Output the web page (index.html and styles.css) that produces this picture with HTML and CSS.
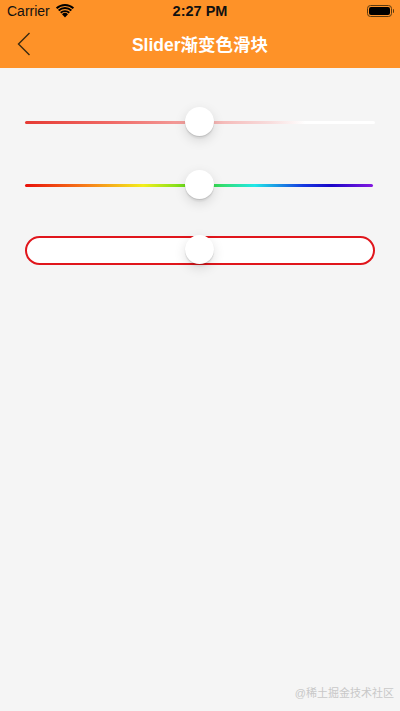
FILE: index.html
```html
<!DOCTYPE html>
<html lang="zh-CN">
<head>
    <meta charset="UTF-8">
    <meta name="viewport" content="width=device-width, initial-scale=1.0">
    <title>Slider渐变色滑块</title>
    <link rel="stylesheet" href="styles.css">
</head>
<body>

<div class="header">
    <div class="status-bar">
        <div class="carrier">
            Carrier
            <svg class="wifi" width="20" height="14" viewBox="0 0 18 13">
                <path d="M9 12.6 L6.2 9.5 A4 4 0 0 1 11.8 9.5 Z" fill="#000"/>
                <path d="M4.4 7.5 A6.8 6.8 0 0 1 13.6 7.5 L12.4 8.8 A5 5 0 0 0 5.6 8.8 Z" fill="#000"/>
                <path d="M2.5 5.4 A9.6 9.6 0 0 1 15.5 5.4 L14.3 6.7 A7.8 7.8 0 0 0 3.7 6.7 Z" fill="#000"/>
                <path d="M0.6 3.3 A12.4 12.4 0 0 1 17.4 3.3 L16.2 4.6 A10.6 10.6 0 0 0 1.8 4.6 Z" fill="#000"/>
            </svg>
        </div>
        <div class="time">2:27 PM</div>
        <div class="battery">
            <div class="battery-body"><div class="battery-level"></div></div>
            <div class="battery-nub"></div>
        </div>
    </div>
    <div class="nav-bar">
        <svg class="back" width="14" height="24" viewBox="0 0 14 24">
            <polyline points="12.5,1 1.5,12 12.5,23" fill="none" stroke="#3a2a10" stroke-width="1.4"/>
        </svg>
        <h1>Slider渐变色滑块</h1>
    </div>
</div>

<div class="content">
    <div class="slider">
        <div class="track track-fade"></div>
        <div class="thumb"></div>
    </div>
    <div class="slider">
        <div class="track track-rainbow"></div>
        <div class="thumb"></div>
    </div>
    <div class="slider slider-box">
        <div class="track-box"></div>
        <div class="thumb"></div>
    </div>
</div>

<div class="watermark">@稀土掘金技术社区</div>

</body>
</html>
```

FILE: styles.css
```css
/* General */
* {
    margin: 0;
    padding: 0;
    box-sizing: border-box;
}

body {
    font-family: "Liberation Sans", "Noto Sans CJK SC", sans-serif;
    background: #f5f5f5;
    width: 400px;
    height: 711px;
    position: relative;
    overflow: hidden;
}

/* Header */
.header {
    background: #fe9228;
    height: 68px;
}

.status-bar {
    height: 21px;
    display: flex;
    align-items: center;
    justify-content: space-between;
    padding: 0 6px 0 7px;
    position: relative;
}

.carrier {
    font-size: 14px;
    color: #111;
    display: flex;
    align-items: center;
    gap: 5px;
}

.time {
    position: absolute;
    left: 0;
    right: 0;
    text-align: center;
    font-size: 14.5px;
    font-weight: bold;
    color: #111;
    pointer-events: none;
}

.battery {
    display: flex;
    align-items: center;
    gap: 1px;
}

.battery-body {
    width: 25px;
    height: 12px;
    border: 1px solid #5a3a10;
    border-radius: 3.5px;
    padding: 1px;
}

.battery-level {
    width: 100%;
    height: 100%;
    background: #000;
    border-radius: 2px;
}

.battery-nub {
    width: 1.5px;
    height: 4px;
    background: #5a3a10;
    border-radius: 0 1px 1px 0;
}

.nav-bar {
    height: 47px;
    display: flex;
    align-items: center;
    justify-content: center;
    position: relative;
}

.back {
    position: absolute;
    left: 17px;
    top: 11px;
}

.nav-bar h1 {
    font-size: 17.5px;
    font-weight: bold;
    color: #fff;
    margin-top: -2px;
}

/* Sliders */
.content {
    padding: 39px 25px 0;
    display: flex;
    flex-direction: column;
    gap: 33px;
}

.slider {
    height: 30px;
    position: relative;
    display: flex;
    align-items: center;
}

.track {
    width: 100%;
    height: 3px;
    border-radius: 2px;
}

.track-fade {
    background: linear-gradient(90deg, #e53a33 0%, #f06a66 25%, #f3aaa8 50%, #f8dcdc 70%, #ffffff 80%, #ffffff 100%);
}

.track-rainbow {
    width: 99.5%;
    background: linear-gradient(90deg, #e8100a 0%, #f7801a 18%, #f3ef1c 34%, #40d61a 50%, #20e8e8 66%, #1538e0 80%, #1a06c8 88%, #8418e0 100%);
}

.slider-box {
    margin-top: 2px;
}

.track-box {
    width: 100%;
    height: 29px;
    border: 2px solid #e0161c;
    border-radius: 15px;
    background: #fff;
}

.thumb {
    position: absolute;
    left: 160px;
    top: 0;
    width: 29px;
    height: 29px;
    border-radius: 50%;
    background: #fff;
    box-shadow: 0 4px 12px rgba(0, 0, 0, 0.13), 0 1px 1px rgba(0, 0, 0, 0.12), 0 3px 1px rgba(0, 0, 0, 0.04);
}

/* Watermark */
.watermark {
    position: absolute;
    right: 6px;
    bottom: 11px;
    font-size: 11px;
    color: #c8c8c8;
}
```
